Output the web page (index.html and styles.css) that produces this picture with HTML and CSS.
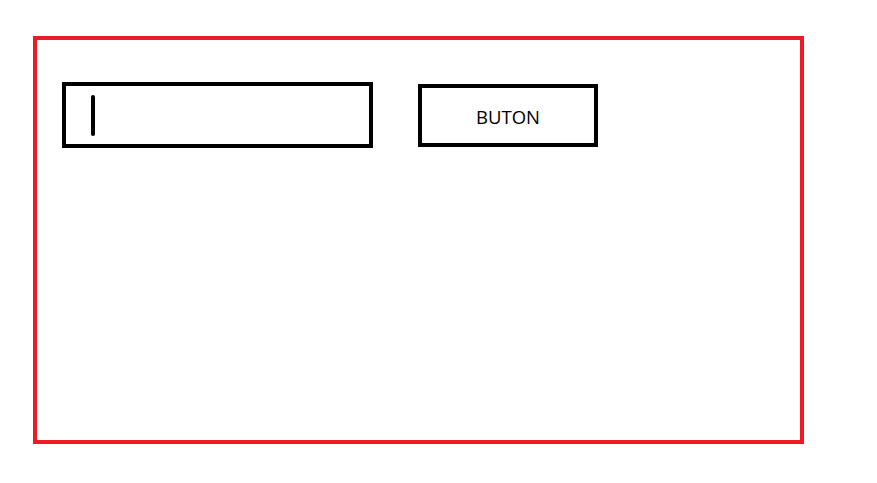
FILE: index.html
```html
<!DOCTYPE html>
<html>
<head>
<meta charset="utf-8">
<link rel="stylesheet" href="styles.css">
</head>
<body>
<div class="frame">
  <div class="row">
    <div class="field"><span class="caret"></span></div>
    <div class="button">BUTON</div>
  </div>
</div>
</body>
</html>
```
FILE: styles.css
```css
html, body {
  margin: 0;
  padding: 0;
  background: #ffffff;
}
body {
  width: 877px;
  height: 483px;
  padding: 36px 0 0 33px;
  box-sizing: border-box;
  font-family: "Open Sans", "Noto Sans", sans-serif;
}
.frame {
  box-sizing: border-box;
  width: 771px;
  height: 408px;
  border: 4px solid #ed1c24;
  padding: 42px 25px 0 25px;
}
.row {
  display: flex;
  align-items: center;
  gap: 45px;
}
.field {
  box-sizing: border-box;
  width: 311px;
  height: 66px;
  border: 4px solid #000;
  display: flex;
  align-items: center;
  padding-left: 25px;
}
.caret {
  display: block;
  width: 4px;
  height: 41px;
  background: #000;
  border-radius: 2px;
}
.button {
  box-sizing: border-box;
  width: 180px;
  height: 63px;
  border: 4px solid #000;
  display: flex;
  align-items: center;
  justify-content: center;
  font-size: 18.5px;
  color: #000;
  padding-top: 2px;
}
```
